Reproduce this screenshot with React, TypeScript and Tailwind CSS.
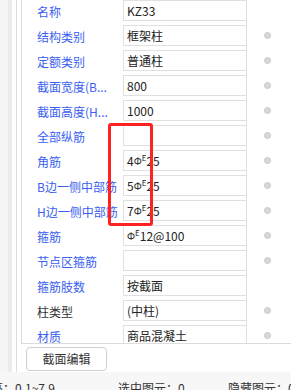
import React from "react";

type Row = { label: string; value: React.ReactNode; dot: boolean; black?: boolean };

const Rebar = ({ n, rest }: { n: string; rest: string }) => (
  <span className="inline-flex items-baseline">
    <span>{n}</span>
    <span className="relative inline-block text-[10px] leading-none" style={{ top: "-1px" }}>Φ</span>
    <span className="relative inline-block text-[8px] leading-none" style={{ top: "-5px" }}>E</span>
    <span>{rest}</span>
  </span>
);

const rows: Row[] = [
  { label: "名称", value: "KZ33", dot: false },
  { label: "结构类别", value: "框架柱", dot: true },
  { label: "定额类别", value: "普通柱", dot: true },
  { label: "截面宽度(B...", value: "800", dot: true },
  { label: "截面高度(H...", value: "1000", dot: true },
  { label: "全部纵筋", value: "", dot: true },
  { label: "角筋", value: <Rebar n="4" rest="25" />, dot: true },
  { label: "B边一侧中部筋", value: <Rebar n="5" rest="25" />, dot: true },
  { label: "H边一侧中部筋", value: <Rebar n="7" rest="25" />, dot: true },
  { label: "箍筋", value: <Rebar n="" rest="12@100" />, dot: true },
  { label: "节点区箍筋", value: "", dot: true },
  { label: "箍筋肢数", value: "按截面", dot: false },
  { label: "柱类型", value: "(中柱)", dot: true, black: true },
  { label: "材质", value: "商品混凝土", dot: true },
];

export default function App() {
  return (
    <div
      className="relative w-[291px] h-[390px] overflow-hidden bg-white text-[12px] text-[#333]"
      style={{ fontFamily: '"Noto Sans CJK SC", "Noto Sans", sans-serif' }}
    >
      <div className="flex h-[372px]">
        {/* left strip */}
        <div className="flex w-[17px] h-full border-r border-[#dcdcdc]">
          <div className="w-[8px] h-full bg-[#f4f5f7]" />
          <div className="w-[4px] h-full bg-[#ebebeb]" />
          <div className="w-[4px] h-full bg-white" />
        </div>
        <div className="w-[4px]" />
        <div className="flex flex-1 flex-col">
          <div className="h-[344px] overflow-hidden border-l border-b border-[#dcdcdc]">
            {rows.map((r, i) => (
              <div key={i} className="flex h-[25px]">
                <div
                  className={`w-[101px] pl-[15px] h-[21px] leading-[23px] whitespace-nowrap ${
                    r.black ? "text-[#333]" : "text-[#3a5ef0]"
                  }`}
                >
                  {r.label}
                </div>
                <div className="w-[124px] h-[25px] border-r border-[#e0e0e0]">
                  <div className="h-[21px] border-l border-t border-b border-[#e0e0e0] pl-[3px] leading-[20px] text-[#222] whitespace-nowrap">
                    {r.value}
                  </div>
                </div>
                <div className="flex flex-1 justify-center pt-[7px] pr-[3px]">
                  {r.dot && (
                    <div className="w-[7px] h-[7px] rounded-full bg-[#d8d8d8] border border-[#c8c8c8]" />
                  )}
                </div>
              </div>
            ))}
          </div>
          <div className="pl-[5px] pt-[3px]">
            <div className="w-[81px] h-[24px] rounded-[4px] border border-[#cfcfcf] bg-white flex items-center justify-center text-[12px] text-[#333]">
              截面编辑
            </div>
          </div>
        </div>
      </div>
      {/* status bar */}
      <div className="h-[18px] bg-[#f7f7f7] relative text-[12px] text-[#333] leading-[20px]">
        <span className="absolute left-[-21px] top-[6px] whitespace-nowrap">标高：0.1~7.9</span>
        <span className="absolute left-[118px] top-[6px] whitespace-nowrap">选中图元：0</span>
        <span className="absolute left-[228px] top-[6px] whitespace-nowrap">隐藏图元：0</span>
      </div>
      {/* red highlight */}
      <div className="absolute left-[108px] top-[123px] w-[45px] h-[103px] border-[3px] border-[#ff2222] rounded-[3px]" />
    </div>
  );
}
